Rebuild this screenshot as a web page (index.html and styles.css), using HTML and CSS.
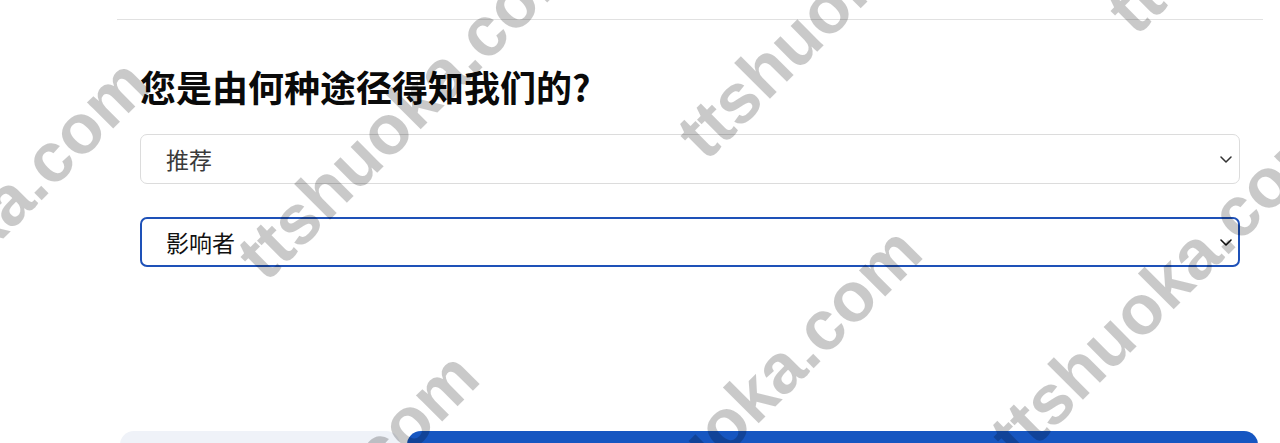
FILE: index.html
```html
<!DOCTYPE html>
<html lang="zh-CN">
<head>
<meta charset="utf-8">
<title>来源调查</title>
<link rel="stylesheet" href="styles.css">
</head>
<body>
<div class="page">
  <div class="divider"></div>
  <section class="content">
    <h1 class="title">您是由何种途径得知我们的?</h1>
    <div class="select">
      <span class="select-text muted">推荐</span>
      <svg class="chevron" width="12" height="7" viewBox="0 0 12 7"><polyline points="1,1 6,6 11,1" fill="none" stroke="#333" stroke-width="1.5" stroke-linecap="round" stroke-linejoin="round"/></svg>
    </div>
    <div class="select focused">
      <span class="select-text">影响者</span>
      <svg class="chevron" width="12" height="7" viewBox="0 0 12 7"><polyline points="1,1 6,6 11,1" fill="none" stroke="#111" stroke-width="1.6" stroke-linecap="round" stroke-linejoin="round"/></svg>
    </div>
  </section>
  <div class="actions">
    <div class="btn btn-secondary"></div>
    <div class="btn btn-primary"></div>
  </div>
</div>
<div class="watermarks">
  <span class="wm wm-a">ttshuoka.com</span>
  <span class="wm wm-b">ttshuoka.com</span>
  <span class="wm wm-c">ttshuoka.com</span>
  <span class="wm wm-d">ttshuoka.com</span>
  <span class="wm wm-e">ttshuoka.com</span>
  <span class="wm wm-f">ttshuoka.com</span>
  <span class="wm wm-g">ttshuoka.com</span>
</div>
</body>
</html>
```

FILE: styles.css
```css
html, body {
  margin: 0;
  padding: 0;
  background: #ffffff;
  overflow: hidden;
}

body {
  font-family: "Noto Sans CJK SC", "Noto Sans", "Liberation Sans", sans-serif;
  color: #111;
}

.page {
  padding-top: 19px;
}

.divider {
  margin-left: 117px;
  margin-right: 17px;
  border-top: 1px solid #e1e1e1;
}

.content {
  padding: 0 40px 0 140px;
  display: flex;
  flex-direction: column;
}

.title {
  margin: 44px 0 26px 0;
  font-size: 36px;
  line-height: 44px;
  font-weight: 700;
  color: #0a0a0a;
}

.select {
  box-sizing: border-box;
  height: 50px;
  border: 1px solid #dcdcdc;
  border-radius: 7px;
  display: flex;
  align-items: center;
  justify-content: space-between;
  padding: 0 7px 0 25px;
  background: #fff;
}

.select + .select {
  margin-top: 33px;
}

.select.focused {
  border: 2px solid #1e51b8;
  padding-left: 24px;
  padding-right: 6px;
}

.select-text {
  font-size: 23px;
  line-height: 30px;
  color: #111;
}

.select-text.muted {
  color: #3a3a3a;
}

.chevron {
  display: block;
}

.actions {
  display: flex;
  gap: 7px;
  padding: 0 22px 0 120px;
  margin-top: 164px;
}

.btn {
  height: 50px;
  border-radius: 14px;
}

.btn-secondary {
  width: 280px;
  background: #eff2f8;
}

.btn-primary {
  flex: 1;
  background: #1656c1;
}

.watermarks {
  position: fixed;
  inset: 0;
  overflow: hidden;
  pointer-events: none;
}

.wm {
  position: absolute;
  font-family: "Liberation Sans", Arial, sans-serif;
  font-weight: 700;
  font-size: 70px;
  line-height: 1;
  color: rgba(0, 0, 0, 0.21);
  white-space: nowrap;
  transform: translate(-50%, -50%) rotate(-45deg);
}

.wm-a { left: -24px; top: 232px; }
.wm-b { left: 410px; top: 106px; }
.wm-c { left: 850px; top: -15px; }
.wm-d { left: 1280px; top: -140px; }
.wm-e { left: 305px; top: 525px; }
.wm-f { left: 748px; top: 400px; }
.wm-g { left: 1163px; top: 286px; }
```
